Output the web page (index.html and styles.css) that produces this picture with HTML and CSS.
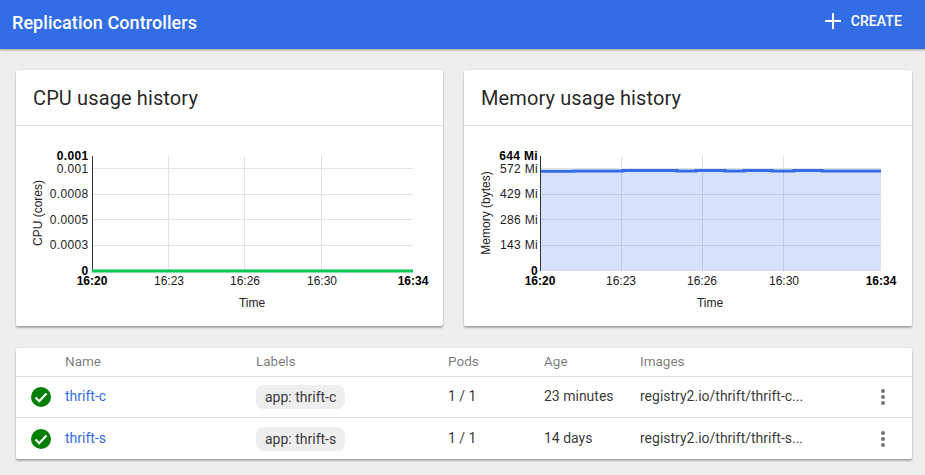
FILE: index.html
```html
<!DOCTYPE html>
<html lang="en">
<head>
<meta charset="utf-8">
<title>Replication Controllers</title>
<link rel="stylesheet" href="styles.css">
</head>
<body>
<header class="toolbar">
  <h1 class="toolbar-title">Replication Controllers</h1>
  <button class="create-btn" type="button">
    <svg class="create-icon" width="16" height="16" viewBox="0 0 16 16"><path d="M7 0h2v7h7v2H9v7H7V9H0V7h7z" fill="#fff"/></svg>
    <span>CREATE</span>
  </button>
</header>
<main class="content">
  <div class="charts">
    <section class="card">
      <h2 class="card-title">CPU usage history</h2>
      <svg class="chart" width="427" height="200" viewBox="0 0 427 200">
        <g class="grid">
          <path d="M76 42.500H397M76 68.500H397M76 93.500H397M76 119.500H397M152.500 30V145M228.500 30V145M305.500 30V145"/>
        </g>
        <path class="axis" d="M76.500 30V145"/>
        <path class="line-green" d="M76 145H397"/>
        <g class="tick tick-y">
          <text class="strong" x="72.500" y="34">0.001</text>
          <text x="72.500" y="47">0.001</text>
          <text x="72.500" y="72">0.0008</text>
          <text x="72.500" y="98">0.0005</text>
          <text x="72.500" y="123">0.0003</text>
          <text class="strong" x="72.500" y="149">0</text>
        </g>
        <g class="tick tick-x">
          <text class="strong" x="76" y="159">16:20</text>
          <text x="153" y="159">16:23</text>
          <text x="229" y="159">16:26</text>
          <text x="306" y="159">16:30</text>
          <text class="strong" x="397" y="159">16:34</text>
        </g>
        <text class="axis-title" x="236" y="181">Time</text>
        <text class="axis-title" transform="translate(26 87) rotate(-90)">CPU (cores)</text>
      </svg>
    </section>
    <section class="card">
      <h2 class="card-title">Memory usage history</h2>
      <svg class="chart" width="448" height="200" viewBox="0 0 448 200">
        <g class="grid">
          <path d="M77 42.500H417M77 68.500H417M77 93.500H417M77 119.500H417M157.500 30V145M238.500 30V145M319.500 30V145"/>
        </g>
        <path class="area" d="M77 45.200H110V44.900H159V44.600H213V45H232V44.500H261V44.900H280V44.500H308V44.900H330V44.500H358V44.900H417V145H77Z"/>
        <path class="axis" d="M76.500 30V145"/>
        <path class="line-blue" d="M77 45.200H110V44.900H159V44.600H213V45H232V44.500H261V44.900H280V44.500H308V44.900H330V44.500H358V44.900H417"/>
        <g class="tick tick-y">
          <text class="strong" x="74" y="34">644 Mi</text>
          <text x="74" y="47">572 Mi</text>
          <text x="74" y="72">429 Mi</text>
          <text x="74" y="98">286 Mi</text>
          <text x="74" y="123">143 Mi</text>
          <text class="strong" x="74" y="149">0</text>
        </g>
        <g class="tick tick-x">
          <text class="strong" x="76" y="159">16:20</text>
          <text x="157" y="159">16:23</text>
          <text x="238" y="159">16:26</text>
          <text x="320" y="159">16:30</text>
          <text class="strong" x="417" y="159">16:34</text>
        </g>
        <text class="axis-title" x="246" y="181">Time</text>
        <text class="axis-title" transform="translate(26 87) rotate(-90)">Memory (bytes)</text>
      </svg>
    </section>
  </div>
  <section class="card list">
    <div class="row head">
      <span></span><span class="cell">Name</span><span class="cell">Labels</span><span class="cell">Pods</span><span class="cell">Age</span><span class="cell">Images</span><span></span>
    </div>
    <div class="row">
      <svg class="status" width="20" height="20" viewBox="0 0 20 20"><circle cx="10" cy="10" r="10" fill="#008000"/><path d="M4.500 10.500l3.700 3.700 7.300-7.700" fill="none" stroke="#fff" stroke-width="2.200"/></svg>
      <a class="cell name" href="#">thrift-c</a>
      <span><span class="chip">app: thrift-c</span></span>
      <span class="cell">1 / 1</span>
      <span class="cell">23 minutes</span>
      <span class="cell">registry2.io/thrift/thrift-c...</span>
      <svg class="more" width="4" height="16" viewBox="0 0 4 16"><circle cx="2" cy="2" r="2"/><circle cx="2" cy="8" r="2"/><circle cx="2" cy="14" r="2"/></svg>
    </div>
    <div class="row">
      <svg class="status" width="20" height="20" viewBox="0 0 20 20"><circle cx="10" cy="10" r="10" fill="#008000"/><path d="M4.500 10.500l3.700 3.700 7.300-7.700" fill="none" stroke="#fff" stroke-width="2.200"/></svg>
      <a class="cell name" href="#">thrift-s</a>
      <span><span class="chip">app: thrift-s</span></span>
      <span class="cell">1 / 1</span>
      <span class="cell">14 days</span>
      <span class="cell">registry2.io/thrift/thrift-s...</span>
      <svg class="more" width="4" height="16" viewBox="0 0 4 16"><circle cx="2" cy="2" r="2"/><circle cx="2" cy="8" r="2"/><circle cx="2" cy="14" r="2"/></svg>
    </div>
  </section>
</main>
</body>
</html>
```
FILE: styles.css
```css
* { box-sizing: border-box; }
html, body { margin: 0; padding: 0; }
body {
  width: 925px;
  height: 475px;
  overflow: hidden;
  background: #eeeeee;
  font-family: Roboto, sans-serif;
  color: rgba(0, 0, 0, 0.87);
}
.toolbar {
  height: 49px;
  background: #326de6;
  box-shadow: 0 1px 2px rgba(0, 0, 0, 0.35);
  display: flex;
  align-items: center;
  justify-content: space-between;
  padding: 0 23px 4px 12px;
  color: #fff;
}
.toolbar-title { margin: 0; font-size: 18px; font-weight: 500; letter-spacing: 0.07px; }
.create-btn {
  display: flex;
  align-items: center;
  gap: 10px;
  padding: 0 0 4px;
  border: 0;
  background: none;
  color: #fff;
  font: 500 14px Roboto, sans-serif;
  letter-spacing: 0.1px;
}
.content { padding: 21px 13px 0 16px; }
.charts {
  display: grid;
  grid-template-columns: 427px 448px;
  gap: 21px;
  margin-bottom: 22px;
}
.card {
  background: #fff;
  border-radius: 2px;
  box-shadow: 0 2px 2px rgba(0, 0, 0, 0.28), 0 0 2px rgba(0, 0, 0, 0.14);
}
.card-title {
  margin: 0;
  height: 56px;
  padding: 0 17px;
  line-height: 56px;
  font-size: 20px;
  font-weight: 400;
  letter-spacing: 0.12px;
  border-bottom: 1px solid #e0e0e0;
}
.chart { display: block; height: 200px; }
.grid path { stroke: #e2e2e2; stroke-width: 1; fill: none; }
.axis { stroke: #333; stroke-width: 1; fill: none; }
.line-green { stroke: #00c853; stroke-width: 3; fill: none; }
.line-blue { stroke: #326de6; stroke-width: 3; fill: none; }
.area { fill: #326de6; fill-opacity: 0.2; }
.tick text, .axis-title {
  font-family: "Liberation Sans", Arial, sans-serif;
  font-size: 12px;
  fill: #222;
}
.tick .strong { font-weight: 700; fill: #000; }
.tick-y text { text-anchor: end; letter-spacing: 0.35px; }
.tick-x text { text-anchor: middle; }
.axis-title { text-anchor: middle; }
.list { font-size: 14px; }
.row {
  display: grid;
  grid-template-columns: 49px 191px 192px 96px 96px 239px 1fr;
  align-items: center;
  height: 41px;
  border-bottom: 1px solid #e0e0e0;
  color: rgba(0, 0, 0, 0.8);
}
.row:last-child { border-bottom: 0; }
.row.head { height: 29px; font-size: 13.500px; color: rgba(0, 0, 0, 0.54); }
.cell { padding-bottom: 2px; }
.status { margin-left: 15px; }
.name { color: #326de6; text-decoration: none; }
.chip {
  display: inline-block;
  height: 24px;
  line-height: 24px;
  padding: 0 9px;
  border-radius: 8px;
  background: #eeeeee;
}
.more { fill: #757575; margin-left: 2px; }
```
